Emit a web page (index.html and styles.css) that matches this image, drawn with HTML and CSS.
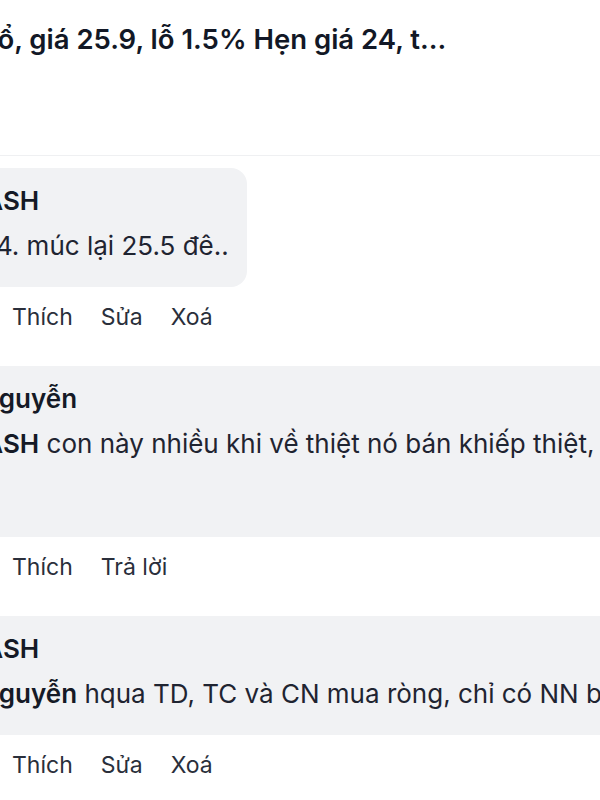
FILE: index.html
```html
<!DOCTYPE html>
<html lang="vi">
<head>
<meta charset="utf-8">
<title>Bình luận</title>
<link rel="stylesheet" href="styles.css">
</head>
<body>
<div class="page">
  <header class="post-head">
    <h1 class="post-title">ASH chốt sổ, giá 25.9, lỗ 1.5% Hẹn giá 24, t...</h1>
  </header>
  <section class="comments">
    <article class="comment">
      <div class="bubble">
        <div class="author">Đức ASH</div>
        <p class="text">bán 24. múc lại 25.5 đê..</p>
      </div>
      <div class="actions"><span>Thích</span><span>Sửa</span><span>Xoá</span></div>
    </article>
    <article class="comment">
      <div class="bubble">
        <div class="author">Lan Nguyễn</div>
        <p class="text"><span class="mention">Đức ASH</span> con này nhiều khi về thiệt nó bán khiếp thiệt, ghê<br><span class="tall-line">hic</span></p>
      </div>
      <div class="actions"><span>Thích</span><span>Trả lời</span></div>
    </article>
    <article class="comment">
      <div class="bubble">
        <div class="author">Đức ASH</div>
        <p class="text"><span class="mention">Lan Nguyễn</span> hqua TD, TC và CN mua ròng, chỉ có NN bán ròng thôi</p>
      </div>
      <div class="actions"><span>Thích</span><span>Sửa</span><span>Xoá</span></div>
    </article>
  </section>
</div>
</body>
</html>
```
FILE: styles.css
```css
html, body {
  margin: 0;
  padding: 0;
  background: #ffffff;
}
body {
  font-family: Inter, "Noto Sans", "DejaVu Sans", sans-serif;
  color: #1d2230;
}
.page {
  width: 600px;
  height: 800px;
  overflow: hidden;
}
.post-head {
  box-sizing: border-box;
  height: 156px;
  padding-top: 21px;
  border-bottom: 1px solid #eff0f2;
}
.post-title {
  margin: 0 0 0 -149px;
  font-size: 27.5px;
  line-height: 36px;
  font-weight: 600;
  color: #121826;
  white-space: nowrap;
}
.comments {
  padding-top: 12px;
}
.comment + .comment {
  margin-top: 34px;
}
.comment {
  margin-left: -87px;
}
.bubble {
  width: fit-content;
  background: #f1f2f4;
  border-radius: 16px;
  padding: 10px 18px 19px 14px;
  white-space: nowrap;
}
.author {
  font-size: 26px;
  line-height: 45px;
  font-weight: 600;
  color: #151a26;
}
.text {
  margin: 0;
  font-size: 26px;
  line-height: 45px;
  font-weight: 400;
  color: #1f2431;
}
.mention {
  font-weight: 600;
  color: #151a26;
}
.tall-line {
  display: inline-block;
  line-height: 52px;
  vertical-align: top;
}
.actions {
  display: flex;
  gap: 28px;
  margin-top: 15px;
  padding-left: 99px;
  font-size: 23px;
  line-height: 30px;
  color: #2a2f3b;
}
```
